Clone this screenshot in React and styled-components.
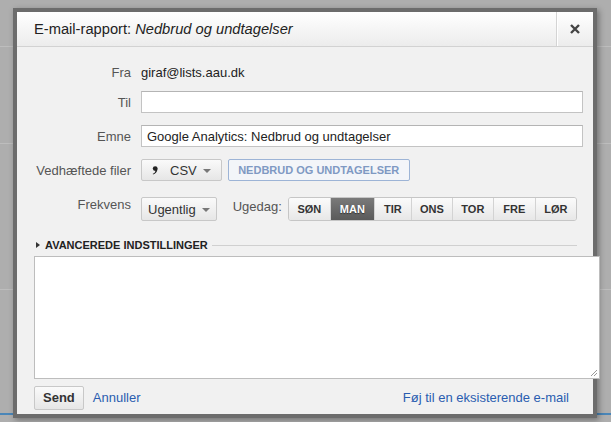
import React from "react";
import styled, { createGlobalStyle } from "styled-components";

const GlobalStyle = createGlobalStyle`
  html, body {
    margin: 0;
    padding: 0;
  }
  body {
    width: 611px;
    height: 422px;
    overflow: hidden;
    background: #adadad;
    font-family: "Liberation Sans", Arial, sans-serif;
    font-size: 13px;
    color: #222;
  }
`;

const Page = styled.div`
  position: relative;
  width: 611px;
  height: 422px;
  background: #aeaeae;
  overflow: hidden;
`;

const BackLine = styled.div`
  height: 1px;
  background: #bdbdbd;
  margin-top: ${(p) => p.$top}px;
`;

const BlueLine = styled.div`
  position: absolute;
  left: 0;
  right: 0;
  top: ${(p) => p.$top}px;
  height: 2px;
  background: #4a86b8;
`;

const Dialog = styled.div`
  position: absolute;
  left: 13px;
  top: 8px;
  width: 576px;
  height: 402px;
  border: 4px solid #6c6c6c;
  background: #f1f1f1;
  display: flex;
  flex-direction: column;
  box-shadow: 2px 2px 6px rgba(0, 0, 0, 0.35);
`;

const Header = styled.div`
  height: 34px;
  display: flex;
  align-items: stretch;
  background: linear-gradient(#ffffff, #ececec);
  border-bottom: 1px solid #d2d2d2;
  flex-shrink: 0;
`;

const Title = styled.div`
  flex: 1;
  display: flex;
  align-items: center;
  padding-left: 17px;
  font-size: 14.7px;
  color: #222;
  em {
    font-style: italic;
    margin-left: 4px;
  }
`;

const CloseButton = styled.div`
  width: 36px;
  display: flex;
  align-items: center;
  justify-content: center;
  border-left: 1px solid #d4d4d4;
  box-shadow: inset 1px 0 0 #ffffff;
`;

const Body = styled.div`
  flex: 1;
  padding: 14px 0 0 0;
  display: flex;
  flex-direction: column;
`;

const Row = styled.div`
  display: flex;
  align-items: center;
  margin-top: ${(p) => p.$gap || 0}px;
  height: ${(p) => p.$h || 22}px;
`;

const Label = styled.div`
  width: 114px;
  text-align: right;
  color: #555;
  padding-right: 10px;
  flex-shrink: 0;
  align-self: ${(p) => (p.$top ? "flex-start" : "center")};
`;

const Value = styled.div`
  color: #222;
`;

const Input = styled.input`
  box-sizing: border-box;
  width: 442px;
  height: 22px;
  border: 1px solid #c3c3c3;
  border-top-color: #b4b4b4;
  background: #fff;
  padding: 0 5px;
  font-family: "Liberation Sans", Arial, sans-serif;
  font-size: 13px;
  color: #222;
  outline: none;
`;

const Button = styled.div`
  box-sizing: border-box;
  height: ${(p) => p.$h || 22}px;
  display: inline-flex;
  align-items: center;
  gap: 6px;
  padding: 0 ${(p) => p.$px || 10}px;
  border: 1px solid #c8c8c8;
  border-radius: 2px;
  background: linear-gradient(#fafafa, #e6e6e6);
  color: #333;
  font-size: 13px;
  font-weight: ${(p) => (p.$bold ? "bold" : "normal")};
  flex-shrink: 0;
`;

const LinkButton = styled.div`
  box-sizing: border-box;
  height: 22px;
  width: 182px;
  display: inline-flex;
  align-items: center;
  justify-content: center;
  margin-left: 6px;
  border: 1px solid #9db4d6;
  border-radius: 2px;
  background: #f3f5f9;
  color: #7f99c3;
  font-size: 11px;
  font-weight: bold;
`;

const Caret = styled.span`
  display: inline-block;
  width: 0;
  height: 0;
  border-left: 4px solid transparent;
  border-right: 4px solid transparent;
  border-top: 4px solid #777;
  margin-top: 2px;
`;

const Inline = styled.span`
  color: #555;
  margin-left: 16px;
  margin-right: 6px;
  align-self: flex-start;
  padding-top: 2px;
`;

const DayGroup = styled.div`
  display: flex;
  height: 24px;
  border: 1px solid #c6c6c6;
  border-radius: 3px;
  overflow: hidden;
  box-sizing: border-box;
`;

const Day = styled.div`
  box-sizing: border-box;
  width: ${(p) => p.$w}px;
  display: flex;
  align-items: center;
  justify-content: center;
  font-size: 11px;
  font-weight: bold;
  border-left: ${(p) => (p.$first ? "none" : "1px solid #d3d3d3")};
  background: ${(p) =>
    p.$active ? "linear-gradient(#7a7a7a, #5a5a5a)" : "linear-gradient(#fbfbfb, #e7e7e7)"};
  color: ${(p) => (p.$active ? "#fff" : "#333")};
  text-shadow: ${(p) => (p.$active ? "0 1px 1px #333" : "none")};
`;

const Advanced = styled.div`
  display: flex;
  align-items: center;
  margin-top: 17px;
  padding-left: 19px;
  padding-right: 16px;
  height: 14px;
  font-size: 11px;
  font-weight: bold;
  color: #222;
`;

const Triangle = styled.span`
  width: 0;
  height: 0;
  border-top: 3px solid transparent;
  border-bottom: 3px solid transparent;
  border-left: 4px solid #333;
  margin-right: 5px;
`;

const Rule = styled.div`
  flex: 1;
  height: 1px;
  background: #d0d0d0;
  margin-left: 4px;
`;

const TextArea = styled.div`
  box-sizing: border-box;
  margin-top: 4px;
  margin-left: 17px;
  width: 566px;
  height: 123px;
  background: #fff;
  border: 1px solid #bdbdbd;
  position: relative;
`;

const Grip = styled.svg`
  position: absolute;
  right: 1px;
  bottom: 1px;
`;

const Footer = styled.div`
  height: 37px;
  display: flex;
  align-items: center;
  padding: 0 24px 0 17px;
  flex-shrink: 0;
`;

const Link = styled.a`
  color: #2a5db0;
  font-size: 13px;
  text-decoration: none;
  margin-left: ${(p) => (p.$right ? "auto" : `${p.$ml || 0}px`)};
`;

const days = [
  ["SØN", 41],
  ["MAN", 44],
  ["TIR", 37],
  ["ONS", 41],
  ["TOR", 41],
  ["FRE", 42],
  ["LØR", 41],
];

export default function App() {
  return (
    <>
      <GlobalStyle />
      <Page>
        <BackLine $top={46} />
        <BackLine $top={96} />
        <BackLine $top={145} />
        <BlueLine $top={413} />
        <Dialog>
          <Header>
            <Title>
              E-mail-rapport:<em>Nedbrud og undtagelser</em>
            </Title>
            <CloseButton>
              <svg width="10" height="10" viewBox="0 0 10 10">
                <path d="M1 1 L9 9 M9 1 L1 9" stroke="#444" strokeWidth="2.4" />
              </svg>
            </CloseButton>
          </Header>
          <Body>
            <Row>
              <Label>Fra</Label>
              <Value>giraf@lists.aau.dk</Value>
            </Row>
            <Row $gap={8}>
              <Label>Til</Label>
              <Input defaultValue="" />
            </Row>
            <Row $gap={12}>
              <Label>Emne</Label>
              <Input defaultValue="Google Analytics: Nedbrud og undtagelser" />
            </Row>
            <Row $gap={12}>
              <Label>Vedhæftede filer</Label>
              <Button $px={10}>
                <svg width="6" height="9" viewBox="0 0 6 9">
                  <circle cx="3.2" cy="2.6" r="2.4" fill="#222" />
                  <path d="M5.4 2.8 C5.4 6 3.6 7.8 1 8.6 L0.8 7.8 C2.6 7 3.4 6 3.4 4.4 Z" fill="#222" />
                </svg>
                <span style={{ marginLeft: 6 }}>CSV</span>
                <Caret />
              </Button>
              <LinkButton>NEDBRUD OG UNDTAGELSER</LinkButton>
            </Row>
            <Row $gap={16} $h={24}>
              <Label $top>Frekvens</Label>
              <Button $h={24} $px={6}>
                Ugentlig
                <Caret />
              </Button>
              <Inline>Ugedag:</Inline>
              <DayGroup>
                {days.map(([d, w], i) => (
                  <Day key={d} $w={w} $first={i === 0} $active={d === "MAN"}>
                    {d}
                  </Day>
                ))}
              </DayGroup>
            </Row>
            <Advanced>
              <Triangle />
              AVANCEREDE INDSTILLINGER
              <Rule />
            </Advanced>
            <TextArea>
              <Grip width="9" height="9" viewBox="0 0 9 9">
                <path d="M8 2 L2 8 M8 5 L5 8" stroke="#999" strokeWidth="1" />
              </Grip>
            </TextArea>
          </Body>
          <Footer>
            <Button $h={24} $px={8} $bold>
              Send
            </Button>
            <Link href="#" $ml={9}>
              Annuller
            </Link>
            <Link href="#" $right>
              Føj til en eksisterende e-mail
            </Link>
          </Footer>
        </Dialog>
      </Page>
    </>
  );
}
